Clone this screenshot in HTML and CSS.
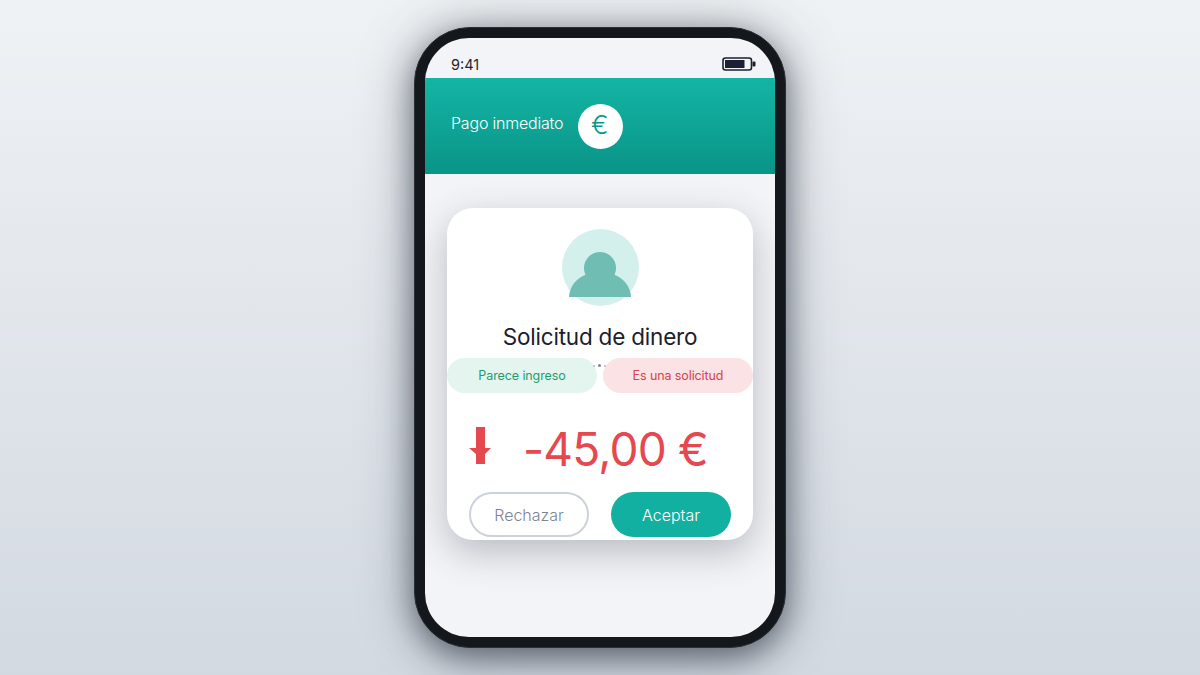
FILE: index.html
```html
<!DOCTYPE html>
<html lang="es">
<head>
  <meta charset="UTF-8">
  <title>Pago inmediato</title>
  <link rel="stylesheet" href="styles.css">
</head>
<body>
  <div class="phone">
    <div class="screen">
      <div class="status-bar">
        <span class="time">9:41</span>
        <svg class="battery" width="34" height="14" viewBox="0 0 34 14">
          <rect x="1" y="1" width="28.500" height="12" rx="2.500" fill="#f3f4f7" stroke="#1b2130" stroke-width="1.600"/>
          <rect x="3" y="3" width="19.500" height="8" fill="#1b2130"/>
          <rect x="30.500" y="4.500" width="3" height="5" rx="1" fill="#1b2130"/>
        </svg>
      </div>
      <div class="header">
        <span class="header-title">Pago inmediato</span>
        <span class="euro-badge">€</span>
      </div>
      <div class="card">
        <svg class="avatar" width="77" height="77" viewBox="0 0 77 77">
          <circle cx="38.500" cy="38.500" r="38.500" fill="#d3f0ed"/>
          <circle cx="38" cy="39" r="16" fill="#6fbdb3"/>
          <path d="M7 68 C8 52 22 43 38 43 C54 43 68 52 69 68 Z" fill="#6fbdb3"/>
        </svg>
        <h2 class="card-title">Solicitud de dinero</h2>
        <div class="pills">
          <span class="pill pill-green">Parece ingreso</span>
          <span class="pill pill-red">Es una solicitud</span>
          <span class="dots"><i></i><i></i><i></i></span>
        </div>
        <div class="amount-row">
          <svg class="arrow" width="24" height="38" viewBox="0 0 24 38">
            <path d="M7 0 H16 V21 H22 L16 27 V37 H7 V27 L0 21 H7 Z" fill="#e5484f"/>
          </svg>
          <span class="amount">-45,00 €</span>
        </div>
        <div class="actions">
          <button class="btn btn-reject">Rechazar</button>
          <button class="btn btn-accept">Aceptar</button>
        </div>
      </div>
    </div>
  </div>
</body>
</html>
```

FILE: styles.css
```css
* {
  box-sizing: border-box;
}
html, body {
  height: 100%;
}
body {
  margin: 0;
  font-family: Inter, "Noto Sans", sans-serif;
  background: linear-gradient(180deg, #eff2f5 0%, #d3d9e1 100%);
  display: flex;
  align-items: center;
  justify-content: center;
  overflow: hidden;
}
.phone {
  width: 372px;
  height: 621px;
  padding: 10px;
  background: #14171b;
  border: 1px solid #2c3036;
  border-radius: 56px;
  box-shadow: 0 10px 32px rgba(30, 38, 50, 0.6), 0 0 60px rgba(40, 48, 60, 0.28);
}
.screen {
  height: 599px;
  background: #f3f4f7;
  border-radius: 44px;
  overflow: hidden;
}
.status-bar {
  height: 40px;
  padding: 12px 19px 0 26px;
  display: flex;
  align-items: center;
  justify-content: space-between;
}
.time {
  font-size: 14.500px;
  color: #1f2530;
}
.header {
  height: 96px;
  padding-left: 26px;
  display: flex;
  align-items: center;
  gap: 15px;
  background: linear-gradient(180deg, #14b5a5 0%, #099487 100%);
}
.header-title {
  margin-bottom: 6px;
  font-size: 16px;
  font-weight: 300;
  letter-spacing: -0.2px;
  color: #fff;
}
.euro-badge {
  width: 45px;
  height: 45px;
  padding: 0 2px 4px 0;
  border-radius: 50%;
  background: #fff;
  color: #0a9689;
  font-size: 26px;
  font-weight: 300;
  display: flex;
  align-items: center;
  justify-content: center;
}
.card {
  width: 306px;
  height: 332px;
  margin: 34px auto 0;
  padding-top: 21px;
  background: #fff;
  border-radius: 26px;
  box-shadow: 0 12px 36px rgba(45, 55, 70, 0.3);
  display: flex;
  flex-direction: column;
  align-items: center;
  overflow: hidden;
}
.avatar {
  flex: none;
}
.card-title {
  margin: 16px 0 0;
  font-size: 22.500px;
  line-height: 30px;
  font-weight: 400;
  letter-spacing: -0.2px;
  color: #1a2030;
}
.pills {
  position: relative;
  width: 100%;
  margin-top: 6px;
  display: flex;
  justify-content: space-between;
}
.pill {
  width: 150px;
  height: 35px;
  border-radius: 18px;
  font-size: 12.500px;
  letter-spacing: -0.1px;
  display: flex;
  align-items: center;
  justify-content: center;
}
.pill-green {
  background: #e3f5ee;
  color: #1f9d6f;
}
.pill-red {
  background: #fbe3e5;
  color: #d9414b;
}
.dots {
  position: absolute;
  top: 6px;
  left: 146px;
  display: flex;
  align-items: center;
  gap: 3px;
}
.dots i {
  width: 2px;
  height: 2px;
  border-radius: 50%;
  background: #b4b8c0;
}
.dots i:nth-child(2) {
  width: 3px;
  height: 3px;
  background: #7f8590;
}
.amount-row {
  width: 100%;
  margin-top: 28px;
  padding-left: 22px;
  display: flex;
  align-items: center;
  gap: 30px;
}
.arrow {
  flex: none;
  margin-bottom: 6px;
}
.amount {
  font-size: 46px;
  line-height: 56px;
  font-weight: 400;
  letter-spacing: -0.8px;
  color: #e5484f;
}
.actions {
  width: 100%;
  margin-top: 15px;
  padding: 0 22px;
  display: flex;
  justify-content: space-between;
}
.btn {
  width: 120px;
  height: 45px;
  border-radius: 23px;
  font-family: inherit;
  font-size: 16px;
  font-weight: 300;
  padding: 0;
}
.btn-reject {
  background: #fff;
  border: 2px solid #cdd1d9;
  color: #7d8494;
}
.btn-accept {
  background: #12b0a0;
  border: none;
  color: #fff;
}
```
